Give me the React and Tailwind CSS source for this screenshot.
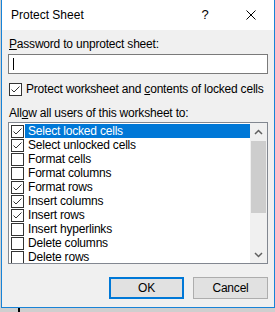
import React from "react";

const items = [
  { label: "Select locked cells", checked: true, selected: true },
  { label: "Select unlocked cells", checked: true },
  { label: "Format cells", checked: false },
  { label: "Format columns", checked: false },
  { label: "Format rows", checked: true },
  { label: "Insert columns", checked: true },
  { label: "Insert rows", checked: true },
  { label: "Insert hyperlinks", checked: false },
  { label: "Delete columns", checked: false },
  { label: "Delete rows", checked: false },
];

function CheckBox({ checked }) {
  return (
    <div className="w-[13px] h-[13px] shrink-0 border border-[#333333] bg-white flex items-center justify-center">
      {checked && (
        <svg width="11" height="11" viewBox="0 0 11 11">
          <polyline points="1.5,5.5 4,8 9.5,2.5" fill="none" stroke="#333333" strokeWidth="1" />
        </svg>
      )}
    </div>
  );
}

function Chevron({ up }) {
  return (
    <svg width="9" height="6" viewBox="0 0 9 6">
      <polyline
        points={up ? "1,5 4.5,1.5 8,5" : "1,1 4.5,4.5 8,1"}
        fill="none"
        stroke="#606060"
        strokeWidth="1.5"
      />
    </svg>
  );
}

export default function App() {
  return (
    <div
      className="w-[275px] h-[312px] bg-[#cfcfcf] flex flex-col overflow-hidden text-[12px] tracking-[-0.2px] text-black whitespace-nowrap"
      style={{ fontFamily: '"Liberation Sans", Arial, sans-serif' }}
    >
      <div className="ml-[1px] w-[274px] h-[308px] shrink-0 flex flex-col border-x border-b border-[#1883d7] bg-[#f0f0f0]">
        {/* Title bar */}
        <div className="h-[30px] bg-white flex items-center">
          <span className="pl-[9px] flex-1 text-[12px] tracking-normal">Protect Sheet</span>
          <div className="w-[46px] h-full flex items-center justify-center text-[13px]">?</div>
          <div className="w-[46px] h-full flex items-center justify-center">
            <svg width="10" height="10" viewBox="0 0 10 10">
              <path d="M0.5 0.5 L9.5 9.5 M9.5 0.5 L0.5 9.5" stroke="#000" strokeWidth="1" />
            </svg>
          </div>
        </div>

        {/* Body */}
        <div className="flex-1 flex flex-col px-[6px] pt-[6px]">
          <div className="h-4 leading-4 pl-[1px]">
            <span className="underline">P</span>assword to unprotect sheet:
          </div>
          <div className="mt-[2px] h-[20px] border border-[#7a7a7a] bg-white flex items-center pl-[4px]">
            <div className="w-[1px] h-[12px] bg-black" />
          </div>

          <div className="mt-[7px] h-4 flex items-center gap-[4px] pl-[1px]">
            <CheckBox checked />
            <span className="leading-4">
              Protect worksheet and <span className="underline">c</span>ontents of locked cells
            </span>
          </div>

          <div className="mt-[8px] h-4 leading-4 pl-[1px]">
            All<span className="underline">o</span>w all users of this worksheet to:
          </div>

          {/* List */}
          <div className="mt-[1px] h-[142px] border border-[#828790] bg-white flex overflow-hidden">
            <div className="flex-1 flex flex-col pt-[1px] pl-[2px]">
              {items.map((it) => (
                <div key={it.label} className="h-[14px] shrink-0 flex items-center">
                  <CheckBox checked={it.checked} />
                  <div
                    className={`ml-[1px] flex-1 h-full pl-[3px] leading-[14px] ${
                      it.selected ? "bg-[#0078d7] text-white" : ""
                    }`}
                  >
                    {it.label}
                  </div>
                </div>
              ))}
            </div>
            <div className="w-[17px] bg-[#f0f0f0] flex flex-col">
              <div className="h-[17px] flex items-center justify-center">
                <Chevron up />
              </div>
              <div className="mt-[1px] h-[72px] mx-[1px] bg-[#cdcdcd]" />
              <div className="flex-1" />
              <div className="h-[17px] flex items-center justify-center">
                <Chevron />
              </div>
            </div>
          </div>

          {/* Buttons */}
          <div className="mt-[13px] flex justify-end gap-[9px]">
            <button className="w-[75px] h-[22px] border-2 border-[#0078d7] bg-[#e1e1e1] flex items-center justify-center">
              OK
            </button>
            <button className="w-[75px] h-[22px] border border-[#adadad] bg-[#e1e1e1] flex items-center justify-center">
              Cancel
            </button>
          </div>
        </div>
      </div>
      <div className="flex-1 flex">
        <div className="ml-[18px] w-[2px] bg-black" />
      </div>
    </div>
  );
}
